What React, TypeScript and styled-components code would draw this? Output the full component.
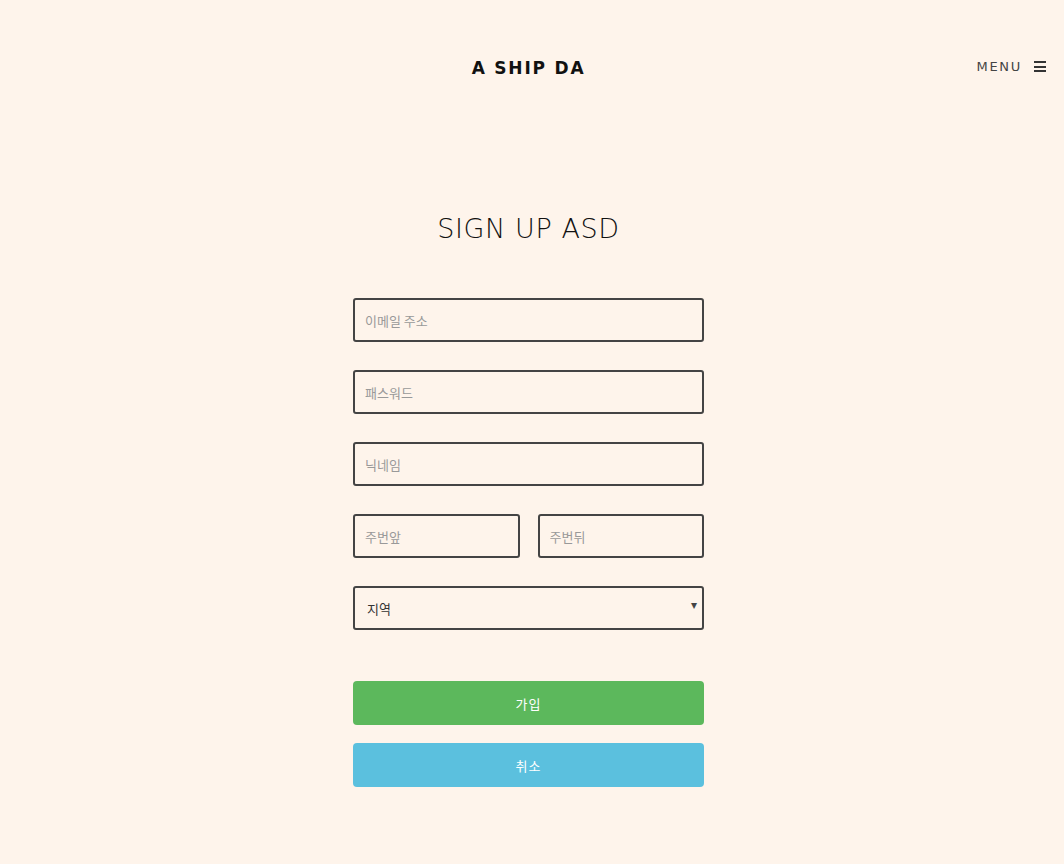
import React from "react";
import styled, {createGlobalStyle} from "styled-components";

const Global = createGlobalStyle`
  html, body {
    margin: 0;
    background: #fef4eb;
  }
  body {
    font-family: "DejaVu Sans", "Noto Sans CJK KR", sans-serif;
  }
`;

const Page = styled.div`
  min-height: 864px;
  background: #fef4eb;
`;

const Header = styled.header`
  position: relative;
  height: 136px;
  display: flex;
  align-items: center;
  justify-content: center;
  padding-right: 7px;
`;

const Logo = styled.h1`
  margin: 0;
  font-size: 17px;
  font-weight: bold;
  letter-spacing: 1.8px;
  color: #111;
`;

const Menu = styled.div`
  position: absolute;
  right: 18px;
  top: 59px;
  display: flex;
  align-items: center;
  gap: 12px;
  font-size: 13px;
  letter-spacing: 1.7px;
  color: #444;
`;

const Burger = styled.span`
  display: flex;
  flex-direction: column;
  gap: 2.5px;
  width: 12px;

  i {
    display: block;
    height: 2px;
    background: #333;
  }
`;

const Main = styled.main`
  display: flex;
  flex-direction: column;
  align-items: center;
  padding-top: 77px;
  padding-right: 7px;
`;

const Title = styled.h2`
  margin: 0 0 54px;
  font-size: 27px;
  font-weight: 200;
  letter-spacing: 0.6px;
  color: #111;
  font-family: "DejaVu Sans", sans-serif;
`;

const Form = styled.form`
  width: 351px;
  display: flex;
  flex-direction: column;
  gap: 28px;
`;

const Field = styled.input`
  box-sizing: border-box;
  width: 100%;
  height: 44px;
  border: 2px solid #444;
  border-radius: 3px;
  background: transparent;
  padding: 0 10px;
  font-size: 13px;
  font-family: "Noto Sans CJK KR", sans-serif;
  color: #333;
  outline: none;

  &::placeholder {
    color: #999;
  }
`;

const Pair = styled.div`
  display: grid;
  grid-template-columns: 1fr 1fr;
  gap: 18px;
`;

const SelectWrap = styled.div`
  position: relative;

  &::after {
    content: "▾";
    position: absolute;
    right: 7px;
    top: 12px;
    font-size: 12px;
    color: #444;
    pointer-events: none;
  }
`;

const Select = styled.select`
  box-sizing: border-box;
  width: 100%;
  height: 44px;
  border: 2px solid #444;
  border-radius: 3px;
  background: transparent;
  padding: 0 12px;
  font-size: 13px;
  font-family: "Noto Sans CJK KR", sans-serif;
  color: #333;
  appearance: none;
  outline: none;
`;

const Buttons = styled.div`
  display: flex;
  flex-direction: column;
  gap: 18px;
  margin-top: 23px;
`;

const Button = styled.button<{$tone: "ok" | "cancel"}>`
  height: 44px;
  border: none;
  border-radius: 4px;
  background: ${(p) => (p.$tone === "ok" ? "#5cb85c" : "#5bc0de")};
  color: #fff;
  font-size: 13px;
  letter-spacing: 1px;
  font-family: "Noto Sans CJK KR", sans-serif;
`;

export default function App() {
  return (
    <Page>
      <Global />
      <Header>
        <Logo>A SHIP DA</Logo>
        <Menu>
          MENU
          <Burger>
            <i />
            <i />
            <i />
          </Burger>
        </Menu>
      </Header>
      <Main>
        <Title>SIGN UP ASD</Title>
        <Form onSubmit={(e) => e.preventDefault()}>
          <Field type="email" placeholder="이메일 주소" />
          <Field type="password" placeholder="패스워드" />
          <Field type="text" placeholder="닉네임" />
          <Pair>
            <Field type="text" placeholder="주번앞" />
            <Field type="text" placeholder="주번뒤" />
          </Pair>
          <SelectWrap>
            <Select defaultValue="">
              <option value="">지역</option>
              <option value="seoul">서울</option>
              <option value="busan">부산</option>
            </Select>
          </SelectWrap>
          <Buttons>
            <Button type="submit" $tone="ok">가입</Button>
            <Button type="button" $tone="cancel">취소</Button>
          </Buttons>
        </Form>
      </Main>
    </Page>
  );
}
